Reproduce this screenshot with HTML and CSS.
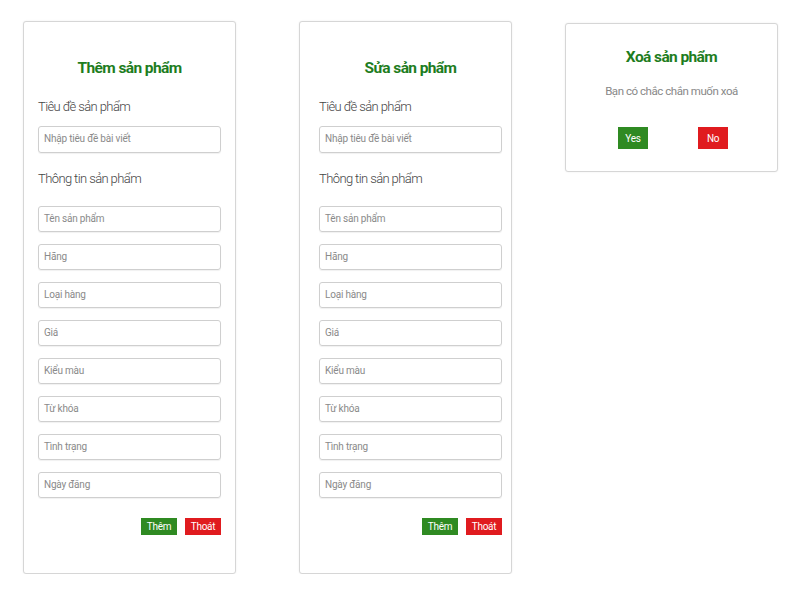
FILE: index.html
```html
<!DOCTYPE html>
<html lang="vi">
<head>
<meta charset="utf-8">
<title>Sản phẩm</title>
<link rel="stylesheet" href="styles.css">
</head>
<body>
<div class="page">
  <div class="card form-card">
    <h2 class="title">Thêm sản phẩm</h2>
    <div class="label">Tiêu đề sản phẩm</div>
    <div class="input small">Nhập tiêu đề bài viết</div>
    <div class="label section">Thông tin sản phẩm</div>
    <div class="fields">
      <div class="input">Tên sản phẩm</div>
      <div class="input">Hãng</div>
      <div class="input">Loại hàng</div>
      <div class="input">Giá</div>
      <div class="input">Kiểu màu</div>
      <div class="input">Từ khóa</div>
      <div class="input">Tình trạng</div>
      <div class="input">Ngày đăng</div>
    </div>
    <div class="actions">
      <button class="btn green">Thêm</button>
      <button class="btn red">Thoát</button>
    </div>
  </div>
  <div class="card form-card shifted">
    <h2 class="title">Sửa sản phẩm</h2>
    <div class="label">Tiêu đề sản phẩm</div>
    <div class="input small">Nhập tiêu đề bài viết</div>
    <div class="label section">Thông tin sản phẩm</div>
    <div class="fields">
      <div class="input">Tên sản phẩm</div>
      <div class="input">Hãng</div>
      <div class="input">Loại hàng</div>
      <div class="input">Giá</div>
      <div class="input">Kiểu màu</div>
      <div class="input">Từ khóa</div>
      <div class="input">Tình trạng</div>
      <div class="input">Ngày đăng</div>
    </div>
    <div class="actions">
      <button class="btn green">Thêm</button>
      <button class="btn red">Thoát</button>
    </div>
  </div>
  <div class="card confirm-card">
    <h2 class="title">Xoá sản phẩm</h2>
    <p class="message">Bạn có chắc chắn muốn xoá</p>
    <div class="confirm-actions">
      <button class="btn big green">Yes</button>
      <button class="btn big red">No</button>
    </div>
  </div>
</div>
</body>
</html>
```

FILE: styles.css
```css
html, body {
  margin: 0;
  padding: 0;
  background: #fff;
  font-family: Roboto, "Noto Sans", sans-serif;
}
.page {
  display: flex;
  align-items: flex-start;
  padding: 21px 0 0 23px;
}
.card {
  box-sizing: border-box;
  width: 213px;
  background: #fff;
  border: 1px solid #d6d6d6;
  border-radius: 3px;
  box-shadow: 0 0 2px rgba(0,0,0,0.08);
}
.form-card {
  height: 553px;
  padding: 36px 14px 0 14px;
  margin-right: 63px;
}
.form-card.shifted {
  padding: 36px 9px 0 19px;
}
.confirm-card {
  margin-left: -10px;
  margin-top: 2px;
  height: 149px;
  padding-top: 23px;
  text-align: center;
}
.title {
  margin: 0;
  height: 20px;
  line-height: 20px;
  font-size: 15.5px;
  font-weight: 700;
  color: #1e7d1e;
  text-align: center;
  letter-spacing: -0.6px;
}
.label {
  margin-top: 21px;
  height: 16px;
  line-height: 16px;
  font-size: 13px;
  font-weight: 300;
  color: #444;
  letter-spacing: -0.6px;
}
.label.section {
  margin-top: 18px;
}
.input {
  box-sizing: border-box;
  margin-top: 11px;
  height: 27px;
  border: 1px solid #cfcfcf;
  border-radius: 3px;
  box-shadow: 0 1px 1px rgba(0,0,0,0.06);
  padding: 0 5px;
  line-height: 24px;
  font-size: 10px;
  color: #8a8a8a;
  letter-spacing: -0.2px;
}
.fields {
  margin-top: 19px;
  display: flex;
  flex-direction: column;
  gap: 12px;
}
.fields .input {
  margin-top: 0;
  height: 26px;
}
.actions {
  margin-top: 20px;
  display: flex;
  justify-content: flex-end;
  gap: 8px;
}
.btn {
  box-sizing: border-box;
  width: 36px;
  height: 17px;
  border: none;
  padding: 0;
  font-family: Roboto, "Noto Sans", sans-serif;
  font-size: 10px;
  color: #fff;
  letter-spacing: -0.3px;
}
.btn.green { background: #2f8a22; }
.btn.red { background: #e01b1f; }
.btn.big {
  width: 30px;
  height: 22px;
}
.message {
  margin: 16px 0 0;
  height: 16px;
  line-height: 16px;
  font-size: 11.5px;
  color: #888;
  letter-spacing: -0.45px;
}
.confirm-actions {
  margin-top: 28px;
  display: flex;
  justify-content: center;
  gap: 50px;
  padding-left: 3px;
}
```
